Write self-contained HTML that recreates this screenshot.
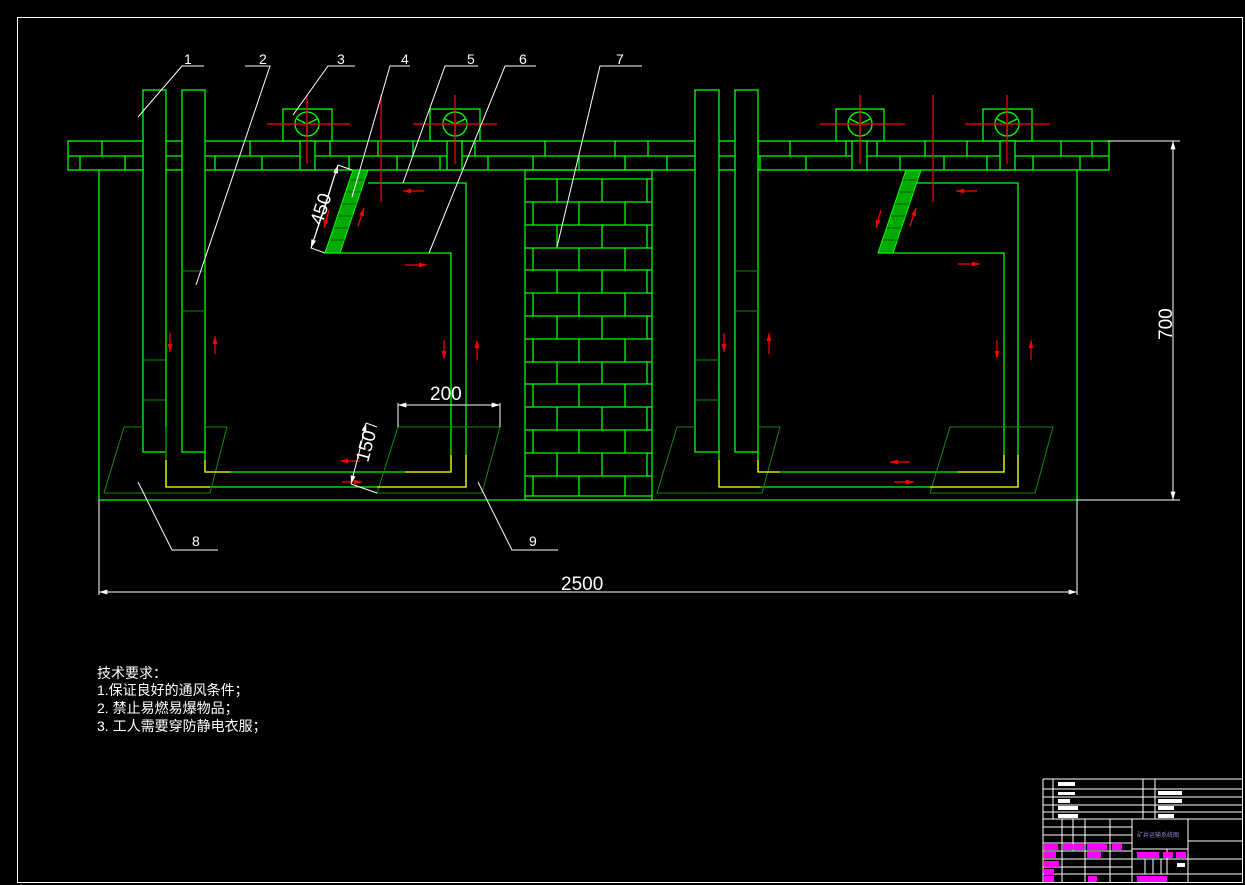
<!DOCTYPE html>
<html><head><meta charset="utf-8"><style>
html,body{margin:0;padding:0;background:#000;width:1245px;height:885px;overflow:hidden}
svg{display:block}
</style></head><body>
<svg width="1245" height="885" viewBox="0 0 1245 885" xmlns="http://www.w3.org/2000/svg" font-family="Liberation Sans, sans-serif">
<defs>
<marker id="ar" viewBox="0 0 10 6" refX="10" refY="3" markerWidth="8" markerHeight="5" orient="auto" markerUnits="userSpaceOnUse"><path d="M0 0L10 3L0 6Z" fill="#ff0000"/></marker>
<marker id="aw" viewBox="0 0 10 6" refX="10" refY="3" markerWidth="14" markerHeight="5" orient="auto" markerUnits="userSpaceOnUse"><path d="M0 0L10 3L0 6Z" fill="#fff"/></marker>
</defs>
<rect width="1245" height="885" fill="#000"/>
<rect x="17.5" y="17.5" width="1225" height="865" fill="none" stroke="#fff" stroke-width="1"/>

<g fill="none" stroke="#00ff00" stroke-width="1.3">
<rect x="68" y="141" width="1041" height="29"/>
<line x1="68" y1="156" x2="1109" y2="156"/>
<path d="M102 141V156M165 141V156M250 141V156M330 141V156M378 141V156M413 141V156M475 141V156M545 141V156M615 141V156M648 141V156M745 141V156M790 141V156M846 141V156M877 141V156M925 141V156M967 141V156M1013 141V156M1061 141V156M1092 141V156"/>
<path d="M80 156V170M125 156V170M215 156V170M262 156V170M305 156V170M349 156V170M397 156V170M440 156V170M488 156V170M533 156V170M579 156V170M625 156V170M667 156V170M700 156V170M760 156V170M806 156V170M900 156V170M944 156V170M987 156V170M1033 156V170M1080 156V170"/>
<path d="M99 170V500H1077V170"/>
<rect x="525" y="170" width="127" height="330"/>
<path d="M525 179H652M525 202H652M525 225H652M525 248H652M525 270H652M525 293H652M525 316H652M525 339H652M525 362H652M525 384H652M525 407H652M525 430H652M525 453H652M525 476H652M525 496H652"/>
<path d="M557 179V202M602 179V202M647 179V202M533 202V225M579 202V225M625 202V225M557 225V248M602 225V248M647 225V248M533 248V270M579 248V270M625 248V270M557 270V293M602 270V293M647 270V293M533 293V316M579 293V316M625 293V316M557 316V339M602 316V339M647 316V339M533 339V362M579 339V362M625 339V362M557 362V384M602 362V384M647 362V384M533 384V407M579 384V407M625 384V407M557 407V430M602 407V430M647 407V430M533 430V453M579 430V453M625 430V453M557 453V476M602 453V476M647 453V476M533 476V496M579 476V496M625 476V496"/>

<rect x="143" y="90" width="23" height="362" fill="#000"/>
<rect x="182" y="90" width="23" height="362" fill="#000"/>
<path d="M166 452V487M205 452V472"/>
<path d="M325 253H451V472H205M368 183H466V487H166"/>
<rect x="283" y="109" width="49" height="32" fill="#000"/>
<rect x="300" y="141" width="15" height="29" fill="#000"/>
<rect x="430" y="109" width="50" height="32" fill="#000"/>
<rect x="447" y="141" width="15" height="29" fill="#000"/>
<circle cx="307" cy="124" r="12"/><circle cx="455" cy="124" r="12"/>
<path d="M297 119L307 124L317 119M307 124V136M445 119L455 124L465 119M455 124V136"/>
<rect x="695" y="90" width="24" height="362" fill="#000"/>
<rect x="735" y="90" width="23" height="362" fill="#000"/>
<path d="M719 452V487M758 452V472"/>
<path d="M878 253H1004V472H758M917 183H1018V487H719"/>
<rect x="836" y="109" width="48" height="32" fill="#000"/>
<rect x="852" y="141" width="15" height="29" fill="#000"/>
<rect x="983" y="109" width="49" height="32" fill="#000"/>
<rect x="1000" y="141" width="15" height="29" fill="#000"/>
<circle cx="860" cy="124" r="12"/><circle cx="1007" cy="124" r="12"/>
<path d="M850 119L860 124L870 119M860 124V136M997 119L1007 124L1017 119M1007 124V136"/>
</g>
<g stroke="#00ff00" stroke-width="1">
<polygon points="325,253 340,253 368,170 353,170" fill="#00aa00"/>
<polygon points="878,253 893,253 921,170 906,170" fill="#00aa00"/>
</g>
<g stroke="#000" stroke-width="0.8" opacity="0.6">
<path d="M330 240H345M334 228H349M338 216H353M342 204H357M346 192H361M350 180H365M883 240H898M887 228H902M891 216H906M895 204H910M899 192H914M903 180H918"/>
</g>
<g fill="none" stroke="#0a8a0a" stroke-width="1">
<path d="M124 427H143M166 427V487M205 427H227L210 493H104L124 427M398 427H500L482 493H377Z"/>
<path d="M677 427H695M758 427H780L762 493H657L677 427M950 427H1053L1035 493H930Z"/>
<path d="M143 360H166M143 400H166M182 271H205M182 311H205M695 360H719M695 400H719M735 271H758M735 311H758"/>
</g>
<g fill="none" stroke="#ffee00" stroke-width="1.3">
<path d="M166 460V487H210M205 460V472H230M377 487H466V455M405 472H451V455"/>
<path d="M719 460V487H760M758 460V472H780M930 487H1018V455M958 472H1004V455"/>
</g>
<g stroke="#ff0000" stroke-width="1.2" fill="none">
<path d="M267 124H350M307 95V164M413 124H497M455 95V164M381 95V202M820 124H905M860 95V164M965 124H1050M1007 95V164M933 95V202"/>
</g>
<g stroke="#ff0000" stroke-width="1.2" fill="none" marker-end="url(#ar)">
<path d="M170 333V352"/><path d="M215 354V336"/><path d="M444 340V359"/><path d="M477 360V340"/>
<path d="M724 333V352"/><path d="M769 354V333"/><path d="M997 340V359"/><path d="M1031 360V340"/>
<path d="M424 191H403"/><path d="M405 265H427"/><path d="M360 461H340"/><path d="M342 482H362"/>
<path d="M977 191H956"/><path d="M958 264H980"/><path d="M910 462H890"/><path d="M894 482H914"/>
<path d="M329 210L324 228"/><path d="M358 226L364 208"/><path d="M881 210L876 228"/><path d="M910 226L916 208"/>
</g>
<g stroke="#fff" stroke-width="1" fill="none">
<path d="M99 500V595M1077 500V595M1108 141H1180M1077 500H1180"/>
<path d="M398 427V403M500 427V403M325 253L311 248L338 165L352 170M377 427L366 423M351 484L377 493"/>
<path d="M204 66H182L138 117M245 66H270L196 285M355 66H328L293 115M410 66H390L352 197M478 66H445L403 183M536 66H505L429 253M642 66H600L557 247M138 482L172 550H218M478 482L512 550H558"/>
</g>
<g stroke="#fff" stroke-width="1" fill="none" marker-end="url(#aw)" marker-start="url(#aw)">
<path d="M99 592H1077" marker-start="none"/><path d="M1077 592H99" marker-start="none"/>
<path d="M1173 320V141" marker-start="none"/><path d="M1173 320V500" marker-start="none"/>
<path d="M449 405H398" marker-start="none"/><path d="M449 405H500" marker-start="none"/>
<path d="M325 207L311 248" marker-start="none"/><path d="M325 207L338 165" marker-start="none"/>
<path d="M359 453L351 484" marker-start="none"/><path d="M359 453L366 423" marker-start="none"/>
</g>
<g font-size="14" fill="#fff">
<text x="184" y="64">1</text><text x="259" y="64">2</text><text x="337" y="64">3</text><text x="401" y="64">4</text><text x="467" y="64">5</text><text x="519" y="64">6</text><text x="616" y="64">7</text><text x="192" y="546">8</text><text x="529" y="546">9</text>
<text x="430" y="400" font-size="19">200</text>
<text x="561" y="590" font-size="19">2500</text>
<text transform="translate(1172,340) rotate(-90)" font-size="19">700</text>
<text transform="translate(322,226) rotate(-72)" font-size="19">450</text>
<text transform="translate(368,463) rotate(-75)" font-size="19">150</text>
</g>
<g font-family="Liberation Sans, Noto Sans CJK SC, sans-serif" font-size="14" fill="#fff">
<text x="97" y="678">技术要求：</text>
<text x="97" y="695">1.保证良好的通风条件；</text>
<text x="97" y="713">2. 禁止易燃易爆物品；</text>
<text x="97" y="731">3. 工人需要穿防静电衣服；</text>
</g>
<g stroke="#fff" stroke-width="1" fill="none">
<path d="M1043 779H1243M1043 779V882M1043 789H1243M1043 797H1243M1043 805H1243M1043 812H1243M1043 819H1243M1053 779V819M1143 779V819M1155 779V819M1043 827H1132M1043 835H1132M1043 843H1132M1043 851H1132M1043 859H1243M1043 867H1132M1043 874H1243M1132 819V882M1188 819V882M1188 841H1243M1132 849H1188M1132 859H1188M1062 819V882M1073 819V851M1085 819V882M1110 819V882M1167 849V874M1145 859V874M1153 859V874M1161 859V874"/>
</g>
<g fill="#fff">
<rect x="1058" y="782" width="17" height="4"/><rect x="1058" y="792" width="17" height="3"/><rect x="1058" y="799" width="12" height="4"/><rect x="1058" y="806" width="20" height="4"/><rect x="1058" y="814" width="20" height="4"/>
<rect x="1158" y="791" width="24" height="4"/><rect x="1158" y="799" width="24" height="4"/><rect x="1158" y="806" width="16" height="4"/><rect x="1158" y="814" width="16" height="4"/>
<rect x="1177" y="863" width="8" height="4"/>
</g>
<g fill="#ff00ff">
<rect x="1044" y="844" width="14" height="6"/><rect x="1063" y="844" width="10" height="6"/><rect x="1074" y="844" width="10" height="6"/><rect x="1087" y="844" width="20" height="6"/><rect x="1112" y="844" width="10" height="6"/>
<rect x="1044" y="852" width="12" height="6"/><rect x="1087" y="852" width="14" height="6"/><rect x="1044" y="861" width="15" height="6"/><rect x="1044" y="869" width="10" height="6"/><rect x="1044" y="876" width="10" height="6"/><rect x="1088" y="876" width="9" height="6"/>
<rect x="1137" y="852" width="22" height="6"/><rect x="1163" y="852" width="10" height="6"/><rect x="1176" y="852" width="10" height="6"/><rect x="1137" y="876" width="30" height="6"/>
</g>
<text x="1137" y="837" font-size="6" fill="#8888cc" font-family="Liberation Sans, Noto Sans CJK SC, sans-serif">矿井运输系统图</text>
</svg>
</body></html>
